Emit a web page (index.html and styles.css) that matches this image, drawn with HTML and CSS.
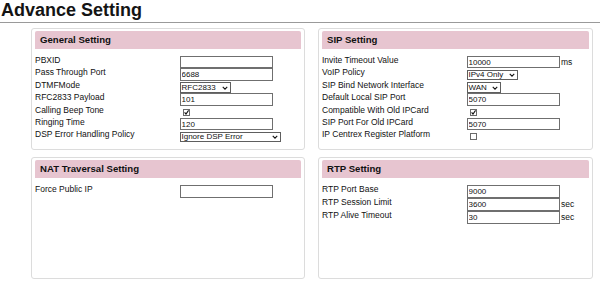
FILE: index.html
```html
<!DOCTYPE html>
<html lang="en">
<head>
<meta charset="utf-8">
<title>Advance Setting</title>
<link rel="stylesheet" href="styles.css">
</head>
<body>
<h1 class="page-title">Advance Setting</h1>
<hr class="rule">
<div class="cards">
  <section class="card">
    <h2 class="card-title">General Setting</h2>
    <div class="form">
      <span class="lbl">PBXID</span>
      <span class="ctl"><input class="txt" type="text" value=""></span>
      <span class="lbl">Pass Through Port</span>
      <span class="ctl"><input class="txt" type="text" value="6688"></span>
      <span class="lbl">DTMFMode</span>
      <span class="ctl"><span class="select w50"><span>RFC2833</span><svg class="chev" viewBox="0 0 8 5"><path d="M1 1 L4 4 L7 1"/></svg></span></span>
      <span class="lbl">RFC2833 Payload</span>
      <span class="ctl"><input class="txt" type="text" value="101"></span>
      <span class="lbl">Calling Beep Tone</span>
      <span class="ctl"><span class="check"><svg viewBox="0 0 5 5"><path d="M0.6 2.3 L2 4.1 L4.6 0.4"/></svg></span></span>
      <span class="lbl">Ringing Time</span>
      <span class="ctl"><input class="txt" type="text" value="120"></span>
      <span class="lbl">DSP Error Handling Policy</span>
      <span class="ctl"><span class="select w102"><span>Ignore DSP Error</span><svg class="chev" viewBox="0 0 8 5"><path d="M1 1 L4 4 L7 1"/></svg></span></span>
    </div>
  </section>
  <section class="card">
    <h2 class="card-title">SIP Setting</h2>
    <div class="form">
      <span class="lbl">Invite Timeout Value</span>
      <span class="ctl"><input class="txt" type="text" value="10000"><span class="unit">ms</span></span>
      <span class="lbl">VoIP Policy</span>
      <span class="ctl"><span class="select w50"><span>IPv4 Only</span><svg class="chev" viewBox="0 0 8 5"><path d="M1 1 L4 4 L7 1"/></svg></span></span>
      <span class="lbl">SIP Bind Network Interface</span>
      <span class="ctl"><span class="select w34"><span>WAN</span><svg class="chev" viewBox="0 0 8 5"><path d="M1 1 L4 4 L7 1"/></svg></span></span>
      <span class="lbl">Default Local SIP Port</span>
      <span class="ctl"><input class="txt" type="text" value="5070"></span>
      <span class="lbl">Compatible With Old IPCard</span>
      <span class="ctl"><span class="check"><svg viewBox="0 0 5 5"><path d="M0.6 2.3 L2 4.1 L4.6 0.4"/></svg></span></span>
      <span class="lbl">SIP Port For Old IPCard</span>
      <span class="ctl"><input class="txt" type="text" value="5070"></span>
      <span class="lbl">IP Centrex Register Platform</span>
      <span class="ctl"><span class="check"></span></span>
    </div>
  </section>
  <section class="card">
    <h2 class="card-title">NAT Traversal Setting</h2>
    <div class="form form-loose">
      <span class="lbl">Force Public IP</span>
      <span class="ctl"><input class="txt" type="text" value=""></span>
    </div>
  </section>
  <section class="card">
    <h2 class="card-title">RTP Setting</h2>
    <div class="form form-loose">
      <span class="lbl">RTP Port Base</span>
      <span class="ctl"><input class="txt" type="text" value="9000"></span>
      <span class="lbl">RTP Session Limit</span>
      <span class="ctl"><input class="txt" type="text" value="3600"><span class="unit">sec</span></span>
      <span class="lbl">RTP Alive Timeout</span>
      <span class="ctl"><input class="txt" type="text" value="30"><span class="unit">sec</span></span>
    </div>
  </section>
</div>
</body>
</html>
```

FILE: styles.css
```css
html, body {
  margin: 0;
  padding: 0;
  background: #ffffff;
}

body {
  font-family: "Liberation Sans", Arial, sans-serif;
  color: #111111;
  width: 600px;
  height: 285px;
  overflow: hidden;
}

.page-title {
  margin: 0;
  padding-left: 1px;
  font-size: 18px;
  line-height: 20px;
  font-weight: bold;
  color: #141414;
}

.rule {
  margin: 2px 0 0 0;
  border: 0;
  border-top: 1px solid #9a9a9a;
  height: 0;
}

.cards {
  display: grid;
  grid-template-columns: 274px 275px;
  grid-template-rows: 122px 122px;
  column-gap: 13px;
  row-gap: 7px;
  margin: 5.3px 0 0 31px;
}

.card {
  box-sizing: border-box;
  border: 1px solid #dcdcdc;
  border-radius: 3px;
  padding: 1.5px 3px 0 3px;
  background: #ffffff;
}

.card-title {
  margin: 0;
  height: 18px;
  line-height: 18px;
  padding-left: 5px;
  background: #e7c5d0;
  font-size: 9.6px;
  font-weight: bold;
  color: #111111;
  border-radius: 2px 2px 0 0;
}

.form {
  display: grid;
  grid-template-columns: 144.5px auto;
  grid-auto-rows: 12.4px;
  margin-top: 7.3px;
}

.form-loose {
  grid-auto-rows: 13.3px;
  margin-top: 6.8px;
}

.lbl {
  font-size: 8.5px;
  line-height: 9px;
  align-self: start;
  white-space: nowrap;
  color: #111111;
}

.ctl {
  display: flex;
  align-items: flex-start;
  height: 100%;
}

.txt {
  box-sizing: border-box;
  width: 93.5px;
  height: 100%;
  margin: 0;
  padding: 0 1px;
  border: 1px solid #6f6f6f;
  border-radius: 0;
  font-family: "Liberation Sans", Arial, sans-serif;
  font-size: 8px;
  color: #111111;
  background: #ffffff;
  outline: none;
}

.unit {
  align-self: center;
  font-size: 8.5px;
  line-height: 9px;
  margin-left: 1px;
}

.select {
  box-sizing: border-box;
  display: flex;
  align-items: center;
  justify-content: space-between;
  height: 10.5px;
  margin-top: 1.5px;
  padding: 0 2px 0 1px;
  border: 1px solid #5e5e5e;
  font-size: 8px;
  line-height: 8px;
  white-space: nowrap;
  background: #ffffff;
}

.w34 { width: 34px; }
.w50 { width: 51px; }
.w102 { width: 101.5px; }

.chev {
  width: 6px;
  height: 4px;
  flex: none;
}

.chev path {
  fill: none;
  stroke: #111111;
  stroke-width: 1.5;
}

.check {
  box-sizing: border-box;
  display: block;
  width: 7px;
  height: 7px;
  margin: 3px 0 0 3px;
  border: 1px solid #6a6a6a;
  background: #ffffff;
}

.check svg {
  display: block;
  width: 5px;
  height: 5px;
}

.check svg path {
  fill: none;
  stroke: #111111;
  stroke-width: 1.1;
}
```
